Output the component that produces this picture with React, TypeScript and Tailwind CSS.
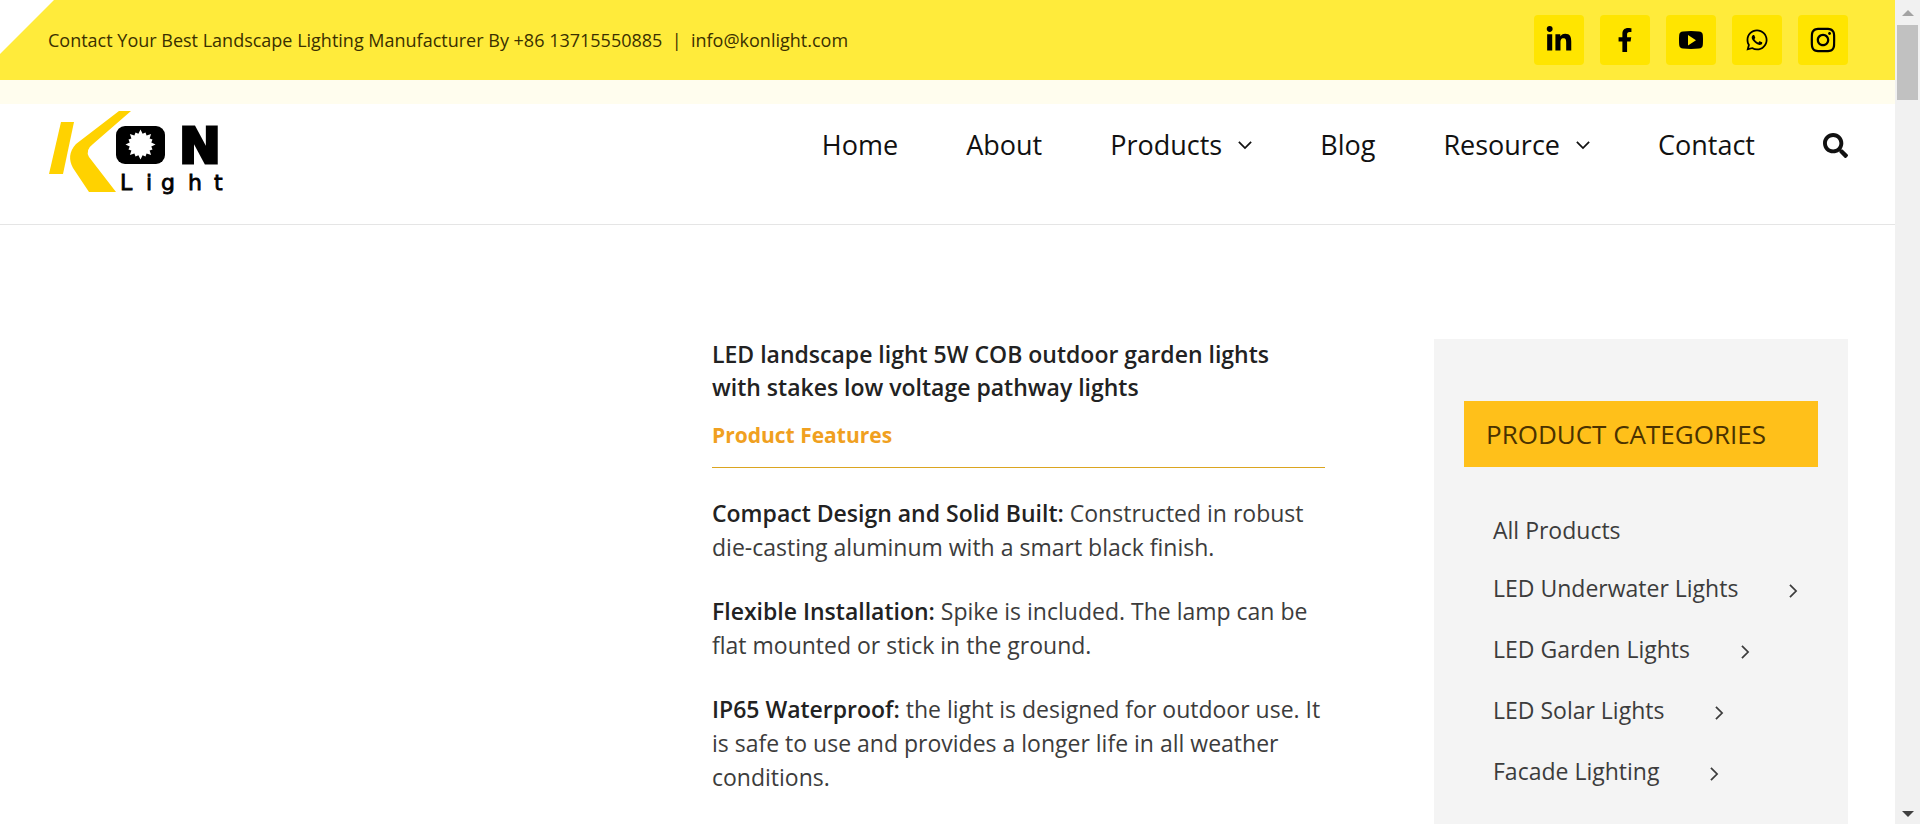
import React from 'react';
import { FaLinkedinIn, FaFacebookF, FaWhatsapp, FaInstagram, FaSearch } from 'react-icons/fa';

interface NavItem {
  label: string;
  hasMenu?: boolean;
}

interface Social {
  name: string;
  icon: React.ReactNode;
}

const NAV: NavItem[] = [
  { label: 'Home' },
  { label: 'About' },
  { label: 'Products', hasMenu: true },
  { label: 'Blog' },
  { label: 'Resource', hasMenu: true },
  { label: 'Contact' },
];

function YoutubeIcon() {
  return (
    <svg viewBox="0 0 24 18" className="h-[18px] w-6" aria-hidden="true">
      <path fill="currentColor" fillRule="evenodd" d="M4 0.5 Q12 -0.3 20 0.5 Q23.5 0.8 23.8 4 Q24.2 9 23.8 14 Q23.5 17.2 20 17.5 Q12 18.3 4 17.5 Q0.5 17.2 0.2 14 Q-0.2 9 0.2 4 Q0.5 0.8 4 0.5 Z M9 4 V14.5 L17 9.2 Z" />
    </svg>
  );
}

const SOCIALS: Social[] = [
  { name: 'LinkedIn', icon: <FaLinkedinIn size={28} /> },
  { name: 'Facebook', icon: <FaFacebookF size={24} /> },
  { name: 'YouTube', icon: <YoutubeIcon /> },
  { name: 'WhatsApp', icon: <FaWhatsapp size={24} /> },
  { name: 'Instagram', icon: <FaInstagram size={28} /> },
];

const FEATURES = [
  { title: 'Compact Design and Solid Built:', text: 'Constructed in robust die-casting aluminum with a smart black finish.' },
  { title: 'Flexible Installation:', text: 'Spike is included. The lamp can be flat mounted or stick in the ground.' },
  { title: 'IP65 Waterproof:', text: 'the light is designed for outdoor use. It is safe to use and provides a longer life in all weather conditions.' },
];

const CATEGORIES = ['LED Underwater Lights', 'LED Garden Lights', 'LED Solar Lights', 'Facade Lighting'];

function Chevron({ className }: { className?: string }) {
  return (
    <svg viewBox="0 0 16 16" fill="none" stroke="currentColor" strokeWidth="2" className={className} aria-hidden="true">
      <path d="M1 4.5 L8 11.5 L15 4.5" />
    </svg>
  );
}

// 16 rays, long and short alternating
function sunPoints(cx: number, cy: number) {
  return Array.from({ length: 32 }, (_, i) => {
    const r = i % 2 === 1 ? 11 : i % 4 === 0 ? 15 : 13;
    const a = (i * Math.PI) / 16;
    return `${(cx + r * Math.cos(a)).toFixed(1)},${(cy + r * Math.sin(a)).toFixed(1)}`;
  }).join(' ');
}

function Logo() {
  return (
    <svg viewBox="0 0 176 84" className="h-[84px] w-[176px]" role="img" aria-label="Kon Light">
      <path d="M13 11 H26 L15 63 H1 Z" fill="#ffd200" />
      <path d="M71 0 H83 L45 33 Q37 39 41 46 L68 81 H41 L25 57 Q18 44 28 33 Z" fill="#ffd200" />
      <rect x="68" y="15" width="49" height="38" rx="9" />
      <polygon points={sunPoints(92.5, 33.5)} fill="#fff" />
      <text x="131" y="52" fontSize="50" fontWeight="700" fontFamily="DejaVu Sans" stroke="#000" strokeWidth="3">N</text>
      <text x="72 98 113 140 166" y="79" fontSize="22" fontFamily="DejaVu Sans" stroke="#000" strokeWidth="0.8">Light</text>
    </svg>
  );
}

function TopBar() {
  return (
    <div className="relative flex h-20 items-center justify-between bg-[#ffeb3b] pl-12 pr-[47px]">
      <div className="absolute left-0 top-0 h-[54px] w-[54px] bg-white [clip-path:polygon(0_0,100%_0,0_100%)]" />
      <p className="relative text-lg text-[#3a3000]">
        Contact Your Best Landscape Lighting Manufacturer By +86 13715550885 &nbsp;|&nbsp;{' '}
        <a href="mailto:info@konlight.com">info@konlight.com</a>
      </p>
      <div className="flex gap-4">
        {SOCIALS.map((s) => (
          <a key={s.name} href="#" aria-label={s.name} className="flex h-[50px] w-[50px] items-center justify-center rounded bg-[#ffe500] text-black">
            {s.icon}
          </a>
        ))}
      </div>
    </div>
  );
}

function Header() {
  return (
    <header className="border-b border-[#e5e5e5]">
      <TopBar />
      <div className="h-6 bg-[#fffdee]" />
      <div className="flex h-[120px] items-start justify-between pl-12 pr-[47px] pt-[7px]">
        <a href="#"><Logo /></a>
        <nav className="flex items-center gap-[68px] pt-4 text-[27px] leading-9 text-[#111]">
          {NAV.map((item) => (
            <a key={item.label} href="#" className="flex items-center gap-4">
              {item.label}
              {item.hasMenu && <Chevron className="h-[14px] w-[14px]" />}
            </a>
          ))}
          <button type="button" aria-label="Search"><FaSearch size={25} /></button>
        </nav>
      </div>
    </header>
  );
}

function Sidebar() {
  return (
    <aside className="mt-px w-[414px] shrink-0 bg-[#f4f4f4] px-[30px] pt-[62px]">
      <h2 className="mb-10 bg-[#ffc01a] px-[22px] py-4 text-[26px] leading-[34px] text-[#4a3200]">PRODUCT CATEGORIES</h2>
      <ul className="px-[29px] text-[23px] leading-8 text-[#3c3c3c]">
        <li className="flex h-[58px] items-start pt-[7px]"><a href="#">All Products</a></li>
        {CATEGORIES.map((name) => (
          <li key={name} className="flex h-[61px] items-start">
            <a href="#" className="flex items-center gap-12 pt-[7px] whitespace-nowrap">
              {name}
              <Chevron className="mt-[6px] h-[14px] w-[14px] -rotate-90" />
            </a>
          </li>
        ))}
      </ul>
    </aside>
  );
}

function Product() {
  return (
    <section className="w-[613px] shrink-0 text-[#3c3c3c]">
      <h1 className="text-[23px] leading-[33px] font-semibold text-[#222]">
        LED landscape light 5W COB outdoor garden lights
        <br />
        with stakes low voltage pathway lights
      </h1>
      <h2 className="mt-[14px] border-b border-[#dba520] pb-[15px] text-[21px] leading-[34px] font-bold text-[#f0a020]">Product Features</h2>
      <div className="mt-7 space-y-[30px] text-[23px] leading-[34px]">
        {FEATURES.map((f) => (
          <p key={f.title}>
            <strong className="font-semibold text-[#222]">{f.title}</strong> {f.text}
          </p>
        ))}
      </div>
    </section>
  );
}

function Scrollbar() {
  return (
    <div className="sticky top-0 flex h-screen w-[25px] shrink-0 flex-col items-center bg-[#f1f1f1]">
      <div className="flex h-[25px] items-center">
        <svg viewBox="0 0 12 6" className="h-[6px] w-3" fill="#a3a3a3"><path d="M0 6 L6 0 L12 6 Z" /></svg>
      </div>
      <div className="h-[75px] w-[21px] bg-[#c1c1c1]" />
      <div className="mt-auto flex h-[21px] items-center">
        <svg viewBox="0 0 12 6" className="h-[6px] w-3" fill="#404040"><path d="M0 0 L12 0 L6 6 Z" /></svg>
      </div>
    </div>
  );
}

export default function App() {
  return (
    <div className="flex min-h-screen bg-white font-['Open_Sans',sans-serif]">
      <div className="flex min-w-0 flex-1 flex-col">
        <Header />
        <main className="flex flex-1 justify-end gap-[109px] pl-12 pr-[47px] pt-[113px]">
          <Product />
          <Sidebar />
        </main>
      </div>
      <Scrollbar />
    </div>
  );
}
